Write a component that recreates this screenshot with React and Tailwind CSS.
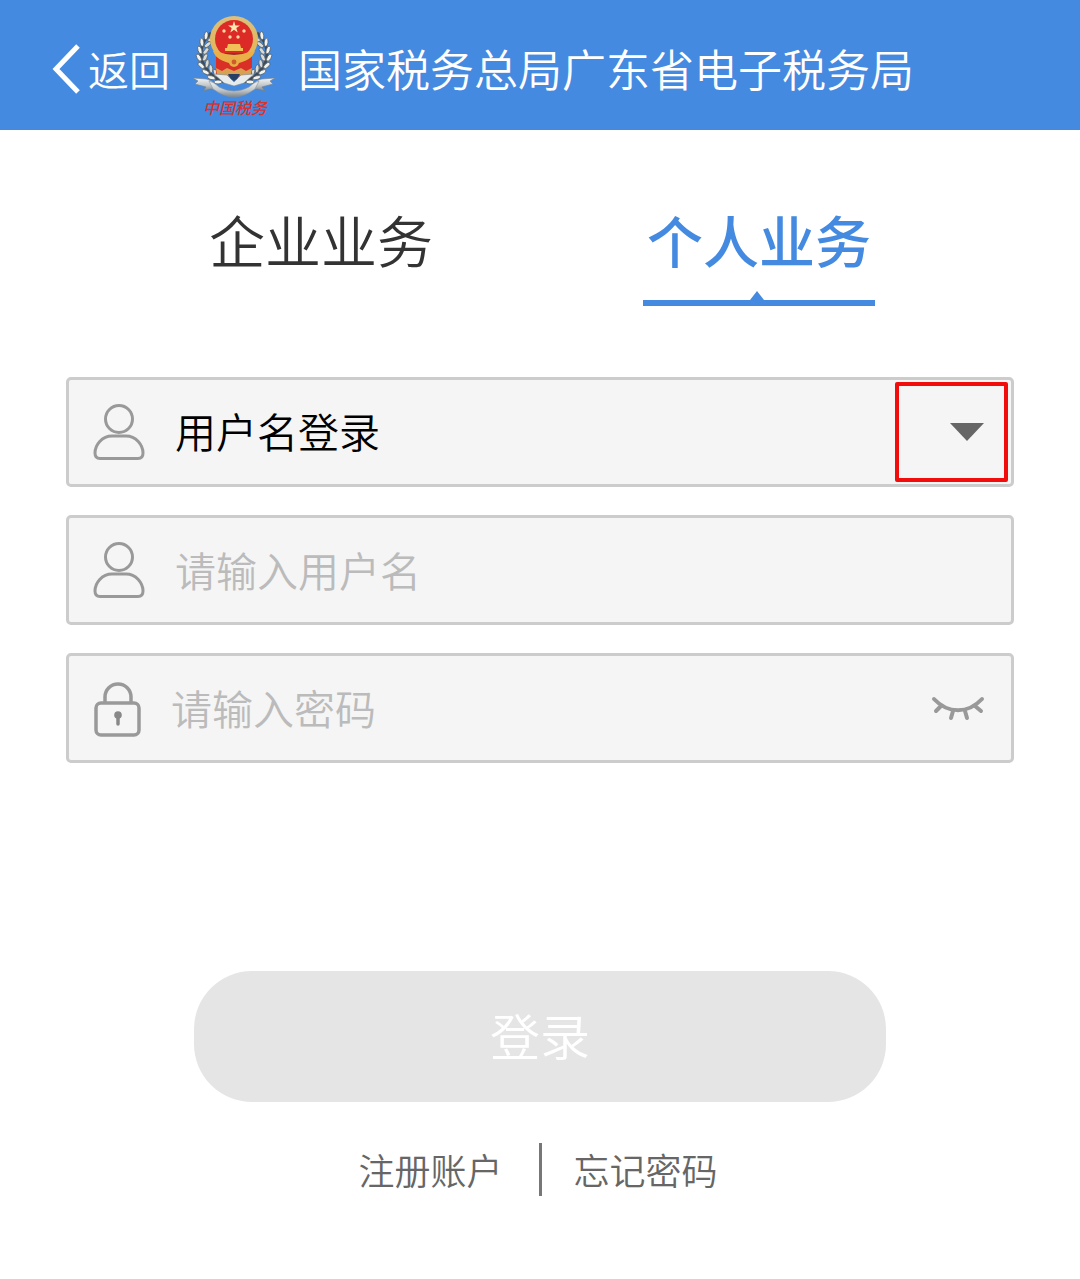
import { useState } from "react";

const leaves = [
  [17, 22, -55], [13, 28, -68], [11, 35, -80], [10, 42, -92], [12, 49, -108], [16, 55, -124], [21, 60, -138], [27, 64, -152],
];

function Emblem() {
  return (
    <svg viewBox="0 0 84 104" className="h-[104px] w-[84px] shrink-0" role="img" aria-label="中国税务">
      <defs>
        <linearGradient id="silver" x1="0" y1="0" x2="0" y2="1">
          <stop offset="0" stopColor="#f4f6f7" />
          <stop offset="0.55" stopColor="#c3c9cc" />
          <stop offset="1" stopColor="#7e868b" />
        </linearGradient>
        <linearGradient id="gold" x1="0" y1="0" x2="0" y2="1">
          <stop offset="0" stopColor="#dcc07c" />
          <stop offset="1" stopColor="#e6b34e" />
        </linearGradient>
      </defs>
      {[false, true].map((flip) => (
        <g key={String(flip)} transform={flip ? "translate(84 0) scale(-1 1)" : undefined}>
          <path d="M19 18 C7 28 7 42 13 52 C18 60 25 65 33 67" fill="none" stroke="#3f4a55" strokeWidth="3" />
          {leaves.map(([x, y, r]) => (
            <g key={y} transform={`translate(${x} ${y}) rotate(${r})`}>
              <ellipse cx="1" cy="-3" rx="4" ry="1.9" transform="rotate(-28)" fill="#f1f3ee" stroke="#4d565e" strokeWidth="0.7" />
              <ellipse cx="1" cy="3" rx="4" ry="1.9" transform="rotate(28)" fill="#d9dcd6" stroke="#4d565e" strokeWidth="0.7" />
            </g>
          ))}
          <path d="M1 63 L14 64 C20 65 24 70 29 76 L19 74 L11 76 L14 72 L3 69 L6 66 Z" fill="url(#silver)" stroke="#75808a" strokeWidth="0.6" />
        </g>
      ))}
      <path d="M24 40 H60 V60 Q51 63 42 61 Q33 63 24 60 Z" fill="#d92f27" />
      <ellipse cx="42" cy="24" rx="24" ry="23" fill="url(#gold)" />
      <ellipse cx="42" cy="24" rx="19" ry="19" fill="#dc2a26" />
      <path d="M42 6 L43.400 10.400 H48 L44.300 13 L45.700 17.400 L42 14.700 L38.300 17.400 L39.700 13 L36 10.400 H40.600 Z" fill="#ffe9b0" />
      <g fill="#ffd6a0">
        <circle cx="32" cy="16" r="1.700" />
        <circle cx="52" cy="16" r="1.700" />
        <circle cx="38" cy="22" r="1.700" />
        <circle cx="46" cy="22" r="1.700" />
      </g>
      <path d="M36 29 H48 L49 33 H51 V36 H33 V33 H35 Z" fill="#f2c058" />
      <path d="M26 38 H58 L55 41 H29 Z" fill="#94322a" />
      <path d="M21 36 L27 37 Q42 43 57 37 L63 36 Q60 46 42 49 Q24 46 21 36 Z" fill="#eab047" />
      <circle cx="42" cy="47" r="5" fill="#e9ad45" />
      <circle cx="42" cy="47" r="2.400" fill="#cf5a2c" />
      <path d="M24 53 l6 3 5-3 7 3 7-3 5 3 6-3 -1 7 -9 1 -8-2 -8 2 -9-1 Z" fill="#d7a052" />
      <path d="M22 59 L35 60 L42 67 L49 60 L62 59 L52 68 L42 71 L32 68 Z" fill="#e7ebec" stroke="#7a858e" strokeWidth="0.600" />
      <path d="M36 59 L48 59 L45 64 L42 66 L39 64 Z" fill="#263f66" />
      <path d="M17 66 Q22 67 27 72 Q42 80 57 72 Q62 67 67 66 L63 74 Q42 90 21 74 Z" fill="url(#silver)" stroke="#87919a" strokeWidth="0.600" />
      <text x="43" y="99" textAnchor="middle" fontSize="16" fontWeight="500" fontStyle="italic" fill="#d8322f">
        中国税务
      </text>
    </svg>
  );
}

function UserIcon() {
  return (
    <svg viewBox="0 0 52 58" className="h-[58px] w-[52px] shrink-0" fill="none" stroke="#999" strokeWidth="3" aria-hidden="true">
      <circle cx="26" cy="16" r="13.500" />
      <path d="M19 33 H33 C43 33 50 42 50 50 Q50 55.500 45 55.500 H7 Q2 55.500 2 50 C2 42 9 33 19 33 Z" />
    </svg>
  );
}

function LockIcon() {
  return (
    <svg viewBox="0 0 48 58" className="h-[58px] w-12 shrink-0" fill="none" stroke="#999" strokeWidth="3.500" aria-hidden="true">
      <path d="M12 24 V18 A13 13 0 0 1 38 18 V24" />
      <rect x="3" y="24" width="43" height="32" rx="5" />
      <circle cx="25" cy="36" r="3.800" fill="#888" stroke="none" />
      <path d="M25 37 V45" stroke="#888" strokeLinecap="round" />
    </svg>
  );
}

function ClosedEyeIcon() {
  return (
    <svg viewBox="0 0 54 26" className="h-[26px] w-[54px]" fill="none" stroke="#999" strokeWidth="4" strokeLinecap="round" aria-hidden="true">
      <path d="M3 4 C17 19 37 19 51 4" />
      <path d="M10 11 L5 16 M22 16 L20 23 M34 16 L36 23 M44 11 L50 16" />
    </svg>
  );
}

const field = "relative flex h-[110px] items-center rounded-[5px] border-3 border-[#ccc] bg-[#f5f5f5] pl-6";
const control = "h-full min-w-0 flex-1 bg-transparent pb-0.5 text-[41px] outline-none placeholder:text-[#bbb] placeholder:opacity-100";

export default function App() {
  const [tab, setTab] = useState("个人业务");
  const [visible, setVisible] = useState(false);

  return (
    <div className="min-h-screen bg-white font-['Noto_Sans_CJK_SC',sans-serif] font-[350]">
      <header className="flex h-[130px] items-center bg-[#448ae0] pl-[52px] text-white">
        <button type="button" className="flex items-center gap-2 pt-2 text-[41px]">
          <svg viewBox="0 0 28 52" className="h-[52px] w-7" fill="none" stroke="currentColor" strokeWidth="5" aria-hidden="true">
            <path d="M26 3 L4 26 L26 49" />
          </svg>
          返回
        </button>
        <div className="ml-[22px] pt-1">
          <Emblem />
        </div>
        <h1 className="ml-[22px] pt-1.5 text-[44px] font-[350] whitespace-nowrap">国家税务总局广东省电子税务局</h1>
      </header>

      <main>
        <div role="tablist" className="grid grid-cols-2 px-[102px] pt-[67px]">
          {["企业业务", "个人业务"].map((name) => (
            <button
              key={name}
              type="button"
              role="tab"
              aria-selected={tab === name}
              onClick={() => setTab(name)}
              className={
                tab === name
                  ? "flex flex-col items-center text-[56px] leading-[84px] font-medium text-[#448ae0]"
                  : "flex flex-col items-center text-[56px] leading-[84px] text-[#333]"
              }
            >
              {name}
              {tab === name && (
                <svg viewBox="0 0 232 16" className="mt-[9px] h-4 w-[232px]" fill="currentColor" aria-hidden="true">
                  <path d="M0 10 H107 L114 1 L121 10 H232 V16 H0 Z" />
                </svg>
              )}
            </button>
          ))}
        </div>

        <form onSubmit={(e) => e.preventDefault()}>
          <div className="flex flex-col gap-7 px-[66px] pt-[71px]">
            <div className={field}>
              <UserIcon />
              <select aria-label="登录方式" className={`${control} appearance-none pl-[30px] text-black`}>
                <option>用户名登录</option>
              </select>
              <div className="pointer-events-none absolute inset-y-0.5 right-[3px] flex w-[113px] items-center justify-end rounded-xs border-4 border-[#f20d0d] pr-5">
                <svg viewBox="0 0 34 18" className="h-[18px] w-[34px]" fill="#666" aria-hidden="true">
                  <path d="M0 0 H34 L17 18 Z" />
                </svg>
              </div>
            </div>
            <div className={field}>
              <UserIcon />
              <input type="text" aria-label="用户名" placeholder="请输入用户名" className={`${control} pl-[30px]`} />
            </div>
            <div className={field}>
              <LockIcon />
              <input type={visible ? "text" : "password"} aria-label="密码" placeholder="请输入密码" className={`${control} pl-[30px]`} />
              <button type="button" aria-label="显示密码" onClick={() => setVisible(!visible)} className="mr-[26px] shrink-0">
                <ClosedEyeIcon />
              </button>
            </div>
          </div>

          <button type="submit" className="mx-auto mt-52 block h-[131px] w-[64%] rounded-[58px] bg-[#e5e5e5] pb-1 text-[50px] text-white">
            登录
          </button>
        </form>

        <nav className="mt-[41px] flex items-center justify-center pr-1 text-4xl text-[#666]">
          <a href="#register" className="pr-9 pb-0.5">注册账户</a>
          <span className="h-[53px] w-[3px] bg-[#777]" />
          <a href="#forgot" className="pb-0.5 pl-8">忘记密码</a>
        </nav>
      </main>
    </div>
  );
}
